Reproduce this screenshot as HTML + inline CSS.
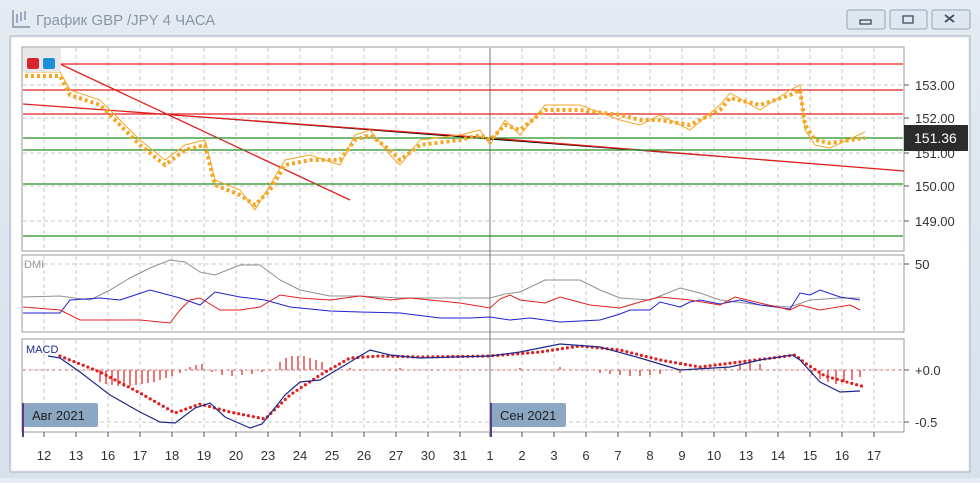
<!DOCTYPE html><html><head><meta charset="utf-8"><style>
body{margin:0;width:980px;height:478px;overflow:hidden;background:linear-gradient(#e4ebf3,#d6e1ec);font-family:"Liberation Sans","Noto Sans CJK SC",sans-serif}
</style></head><body>
<svg width="980" height="478" xmlns="http://www.w3.org/2000/svg" font-family="Liberation Sans, sans-serif">
<g stroke="#6b7f99" fill="none" stroke-width="1.2"><path d="M13 10v17h17"/><path d="M17 14v9M21 12v9M25 11v9"/></g>
<text x="36" y="25" font-size="15" fill="#8996a6">График GBP /JPY  4 ЧАСА</text>
<g fill="#dfe7f0" stroke="#95a6ba"><rect x="847" y="10" width="38" height="19" rx="2"/><rect x="890" y="10" width="37" height="19" rx="2"/><rect x="932" y="10" width="38" height="19" rx="2"/></g>
<rect x="860" y="20" width="11" height="4" fill="none" stroke="#4a5568" stroke-width="1.4"/>
<rect x="903" y="16" width="10" height="7" fill="none" stroke="#4a5568" stroke-width="1.4"/>
<path d="M945 15l9 7M954 15l-9 7" stroke="#4a5568" stroke-width="2"/>
<rect x="10" y="36" width="960" height="436" fill="#eef2f7" stroke="#a8b3c0"/>
<rect x="12" y="38" width="956" height="432" fill="#fff"/>
<g fill="#fff" stroke="#9a9a9a"><rect x="22" y="47" width="882" height="204"/><rect x="22" y="255" width="882" height="77"/><rect x="22" y="339" width="882" height="93"/></g>
<g stroke="#c8c8c8" stroke-dasharray="4 3">
<path d="M44 48v202M76 48v202M108 48v202M140 48v202M172 48v202M204 48v202M236 48v202M268 48v202M300 48v202M332 48v202M364 48v202M396 48v202M428 48v202M460 48v202M522 48v202M554 48v202M586 48v202M618 48v202M650 48v202M682 48v202M714 48v202M746 48v202M778 48v202M810 48v202M842 48v202M874 48v202"/>
<path d="M44 256v75M76 256v75M108 256v75M140 256v75M172 256v75M204 256v75M236 256v75M268 256v75M300 256v75M332 256v75M364 256v75M396 256v75M428 256v75M460 256v75M522 256v75M554 256v75M586 256v75M618 256v75M650 256v75M682 256v75M714 256v75M746 256v75M778 256v75M810 256v75M842 256v75M874 256v75"/>
<path d="M44 340v91M76 340v91M108 340v91M140 340v91M172 340v91M204 340v91M236 340v91M268 340v91M300 340v91M332 340v91M364 340v91M396 340v91M428 340v91M460 340v91M522 340v91M554 340v91M586 340v91M618 340v91M650 340v91M682 340v91M714 340v91M746 340v91M778 340v91M810 340v91M842 340v91M874 340v91"/>
<path d="M23 85h880M23 118h880M23 153h880M23 186h880M23 221h880M23 264h880M23 370h880M23 422h880"/>
</g>
<path d="M490 48v383" stroke="#777"/>
<g stroke="#e02020" stroke-width="1.3"><path d="M23 64h880M23 90h880M23 114h880"/><path d="M23 104L490 138L904 171"/><path d="M60 64L350 200"/></g>
<g stroke="#209020" stroke-width="1.3"><path d="M23 138h880M23 150h880M23 184h880M23 236h880"/></g>
<polyline fill="none" stroke="#f5a623" stroke-width="1" points="25,72 60,72 70,90 100,100 120,120 140,140 165,160 185,145 205,140 215,180 240,190 255,210 270,185 285,160 310,155 340,165 355,135 370,130 390,155 400,165 420,140 460,135 480,130 490,145 505,120 520,135 545,105 580,105 620,120 640,125 660,115 690,130 720,105 730,93 760,110 790,90 800,85 805,130 815,145 830,148 865,132"/>
<polyline fill="none" stroke="#f5a623" stroke-width="4" stroke-dasharray="3 3" points="25,76 60,76 70,95 100,105 120,125 140,145 165,165 185,150 205,145 215,185 240,195 255,205 270,190 285,165 310,160 340,160 355,140 370,135 390,150 400,160 420,145 460,140 480,135 490,140 505,125 520,130 545,110 580,110 620,115 640,120 660,120 690,125 720,110 730,98 760,105 790,95 800,90 805,125 815,140 830,143 865,138"/>
<rect x="23" y="48" width="38" height="24" fill="#e8e8e8"/>
<rect x="27" y="58" width="12" height="11" rx="2" fill="#d9262e"/><rect x="43" y="58" width="12" height="11" rx="2" fill="#1c8fd6"/>
<g font-size="13" fill="#333"><text x="915" y="90">153.00</text><text x="915" y="123">152.00</text><text x="915" y="158">151.00</text><text x="915" y="191">150.00</text><text x="915" y="226">149.00</text><text x="915" y="269">50</text><text x="915" y="375">+0.0</text><text x="915" y="427">-0.5</text></g>
<g stroke="#555"><path d="M904 85h5M904 118h5M904 153h5M904 186h5M904 221h5M904 264h5M904 370h5M904 422h5"/></g>
<rect x="904" y="125" width="64" height="26" fill="#2b2b2b"/><text x="914" y="143" font-size="14" fill="#fff">151.36</text>
<text x="24" y="268" font-size="11" fill="#999">DMI</text>
<polyline fill="none" stroke="#909090" points="23,297 60,296 90,300 110,290 130,278 150,268 170,260 185,262 200,272 215,275 240,265 260,265 280,280 300,290 330,296 360,296 400,298 440,298 490,298 505,294 520,292 545,280 580,280 600,290 620,298 650,300 680,288 700,293 720,300 760,305 790,307 810,300 840,298 860,298"/>
<polyline fill="none" stroke="#2020d0" points="23,313 60,313 70,300 100,298 120,300 150,290 180,298 200,305 215,292 240,297 265,300 290,307 330,311 360,312 400,313 440,318 470,318 490,317 510,320 530,318 560,322 580,321 600,320 620,314 630,310 650,310 660,302 680,307 690,302 700,300 720,304 740,300 760,305 790,309 800,293 810,295 820,290 840,297 860,300"/>
<polyline fill="none" stroke="#e02020" points="23,307 60,310 80,320 110,320 140,320 170,323 180,310 190,300 200,298 220,310 240,310 260,307 280,295 300,298 330,300 360,296 390,300 410,298 430,300 460,303 490,308 500,299 510,295 520,300 545,303 560,297 590,305 620,308 640,302 660,297 690,300 720,305 735,297 760,303 790,310 800,305 820,310 850,305 860,310"/>
<text x="26" y="353" font-size="11" fill="#1e2a8a">MACD</text>
<g stroke="#e02020" stroke-width="1.2"><path d="M100 370v12M106 370v14M112 370v15M118 370v16M124 370v17M130 370v16M136 370v15M142 370v14M148 370v13M154 370v12M160 370v10M166 370v8M172 370v6M180 370v3M190 370v-3M196 370v-5M202 370v-6M212 370v2M222 370v5M232 370v6M242 370v5M252 370v4M262 370v2M280 370v-8M286 370v-12M292 370v-14M298 370v-14M304 370v-14M310 370v-12M316 370v-10M322 370v-8M350 370v-2M400 370v-2M520 370v-2M560 370v-3M600 370v3M610 370v4M620 370v5M630 370v6M640 370v6M650 370v5M660 370v4M680 370v3M725 370v-3M740 370v-6M750 370v-7M760 370v-6M812 370v5M820 370v9M828 370v12M836 370v14M844 370v12M852 370v10M860 370v7"/></g>
<path d="M23 370h880" stroke="#e02020" stroke-dasharray="2 4" stroke-width="0.8"/>
<polyline fill="none" stroke="#e02020" stroke-width="3.2" stroke-linecap="round" stroke-dasharray="0 5" points="60,356 100,372 140,393 175,413 200,404 230,412 265,419 290,395 320,375 350,358 380,356 420,357 490,356 540,352 580,346 620,350 660,360 700,367 740,362 780,357 795,355 805,363 825,376 865,387"/>
<polyline fill="none" stroke="#1e2a8a" stroke-width="1.2" points="48,356 60,358 80,372 110,395 140,412 160,422 175,423 195,408 210,403 225,417 250,428 262,424 285,395 300,382 320,380 345,365 370,350 390,355 420,358 490,356 520,352 560,344 600,347 640,358 680,370 730,367 760,360 792,355 800,360 820,382 840,392 860,391"/>
<rect x="22" y="403" width="76" height="24" rx="2" fill="#8aa7c3"/><path d="M23 403v34" stroke="#5a3a8a" stroke-width="2"/>
<text x="32" y="420" font-size="13" fill="#222">Авг 2021</text>
<rect x="490" y="403" width="76" height="24" rx="2" fill="#8aa7c3"/><path d="M491 403v34" stroke="#5a3a8a" stroke-width="2"/>
<text x="500" y="420" font-size="13" fill="#222">Сен 2021</text>
<g stroke="#555"><path d="M44 432v5M76 432v5M108 432v5M140 432v5M172 432v5M204 432v5M236 432v5M268 432v5M300 432v5M332 432v5M364 432v5M396 432v5M428 432v5M460 432v5M490 432v5M522 432v5M554 432v5M586 432v5M618 432v5M650 432v5M682 432v5M714 432v5M746 432v5M778 432v5M810 432v5M842 432v5M874 432v5"/></g>
<g font-size="13" fill="#333" text-anchor="middle"><text x="44" y="460">12</text><text x="76" y="460">13</text><text x="108" y="460">16</text><text x="140" y="460">17</text><text x="172" y="460">18</text><text x="204" y="460">19</text><text x="236" y="460">20</text><text x="268" y="460">23</text><text x="300" y="460">24</text><text x="332" y="460">25</text><text x="364" y="460">26</text><text x="396" y="460">27</text><text x="428" y="460">30</text><text x="460" y="460">31</text><text x="490" y="460">1</text><text x="522" y="460">2</text><text x="554" y="460">3</text><text x="586" y="460">6</text><text x="618" y="460">7</text><text x="650" y="460">8</text><text x="682" y="460">9</text><text x="714" y="460">10</text><text x="746" y="460">13</text><text x="778" y="460">14</text><text x="810" y="460">15</text><text x="842" y="460">16</text><text x="874" y="460">17</text></g>
</svg>
</body></html>
